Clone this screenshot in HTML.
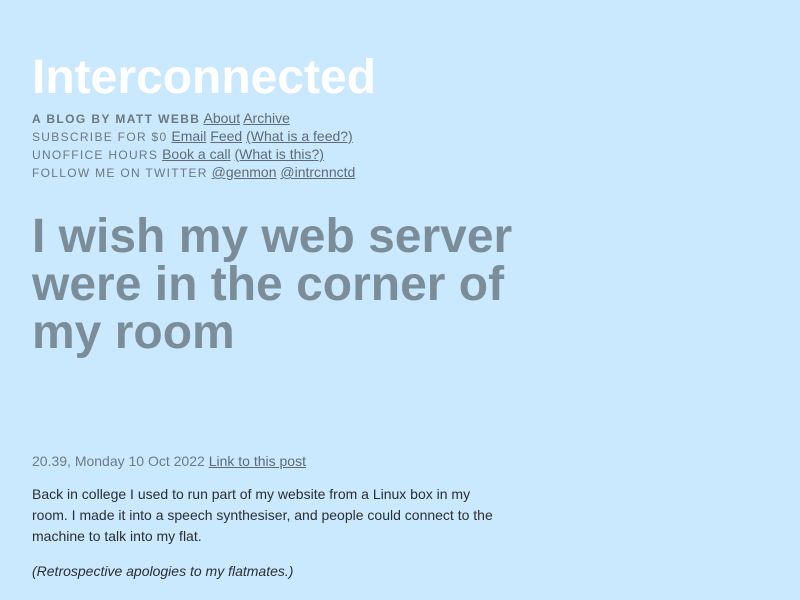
<!DOCTYPE html>
<html><head><style>
body{margin:0;background:#cbe9fe;font-family:"Liberation Sans",Arial,sans-serif;width:800px;height:600px;overflow:hidden}
.w{position:absolute;left:32px;top:0;width:480px}
h1{position:absolute;top:49px;left:0;margin:0;font-size:48px;color:#fff;font-weight:bold;white-space:nowrap;line-height:58px}
.nav{position:absolute;top:109px;left:0;font-size:14px;line-height:18px;color:#6c7780;white-space:nowrap}
.nav div{height:18px;line-height:18px}
.nav span{font-size:12px;letter-spacing:1.3px}
.nav b{font-size:12px;letter-spacing:1.4px}
a{color:#5f6a73;text-decoration:underline}
h2{position:absolute;top:213px;left:0;margin:0;font-size:48px;line-height:48px;color:#7b8d99;font-weight:bold;width:500px}
.date{position:absolute;top:453px;left:0;font-size:14px;color:#6f7a83;white-space:nowrap}
.p{position:absolute;top:484px;left:0;font-size:14px;line-height:21px;color:#2a2e31;width:470px}
.i{position:absolute;top:563px;left:0;font-size:14px;font-style:italic;color:#2a2e31;white-space:nowrap}
</style></head><body><div class="w">
<h1>Interconnected</h1>
<div class="nav">
<div><b>A BLOG BY MATT WEBB</b> <a>About</a> <a>Archive</a></div>
<div><span>SUBSCRIBE FOR $0</span> <a>Email</a> <a>Feed</a> <a>(What is a feed?)</a></div>
<div><span>UNOFFICE HOURS</span> <a>Book a call</a> <a>(What is this?)</a></div>
<div><span>FOLLOW ME ON TWITTER</span> <a>@genmon</a> <a>@intrcnnctd</a></div>
</div>
<h2>I wish my web server were in the corner of my room</h2>
<div class="date">20.39, Monday 10 Oct 2022 <a>Link to this post</a></div>
<div class="p">Back in college I used to run part of my website from a Linux box in my room. I made it into a speech synthesiser, and people could connect to the machine to talk into my flat.</div>
<div class="i">(Retrospective apologies to my flatmates.)</div>
</div></body></html>
